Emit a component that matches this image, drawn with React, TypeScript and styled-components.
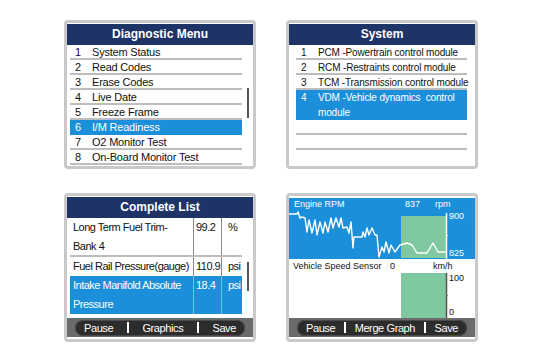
import { Fragment } from "react";
import styled, { createGlobalStyle } from "styled-components";

const GlobalStyle = createGlobalStyle`
  body {
    margin: 0;
    background: #fff;
    font-family: "Liberation Sans", Arial, sans-serif;
  }
`;

const Page = styled.div`
  width: 540px;
  height: 358px;
  box-sizing: border-box;
  padding: 20px 0 0 64px;
  display: grid;
  grid-template-columns: 192px 192px;
  grid-auto-rows: 149px;
  column-gap: 30px;
  row-gap: 24px;
`;

const Frame = styled.section`
  box-sizing: border-box;
  border: 3px solid #c9c9c9;
  border-radius: 4px;
  background: #fff;
  padding-top: 1px;
  display: flex;
  flex-direction: column;
  overflow: hidden;
`;

const Header = styled.div`
  height: 21px;
  background: #1e3466;
  color: #fff;
  font-weight: bold;
  font-size: 12px;
  line-height: 21px;
  text-align: center;
`;

const Body = styled.div<{ $left: number; $right: number }>`
  display: flex;
  margin: 0 ${(p) => p.$right}px 0 ${(p) => p.$left}px;
`;

const List = styled.div`
  flex: 1;
  min-width: 0;
`;

const ScrollTrack = styled.div`
  width: 7px;
  padding-left: 5px;
  box-sizing: border-box;
`;

const Thumb = styled.div<{ $top: number; $h: number }>`
  width: 2px;
  margin-top: ${(p) => p.$top}px;
  height: ${(p) => p.$h}px;
  background: #555;
`;

const MenuRow = styled.div<{ $active?: boolean; $lines?: number; $size: number; $ls: number }>`
  display: flex;
  box-sizing: border-box;
  height: ${(p) => (p.$lines ?? 1) * 15}px;
  padding-left: 5px;
  border-bottom: 2px solid ${(p) => (p.$active ? "transparent" : "#bdbdbd")};
  background: ${(p) => (p.$active ? "#1b8fd9" : "transparent")};
  color: ${(p) => (p.$active ? "#fff" : "#111")};
  font-size: ${(p) => p.$size}px;
  letter-spacing: ${(p) => p.$ls}px;
  line-height: 15px;
  white-space: nowrap;
`;

const Num = styled.span`
  width: 17px;
  flex: none;
`;

const DataRow = styled.div<{ $active?: boolean; $lines: number; $line?: boolean }>`
  display: grid;
  grid-template-columns: 123px 28px 1fr;
  box-sizing: border-box;
  height: ${(p) => p.$lines * 19 + (p.$line ? 1 : 0)}px;
  border-bottom: ${(p) => (p.$line ? "2px solid #bdbdbd" : "none")};
  background: ${(p) => (p.$active ? "#1b8fd9" : "transparent")};
  color: ${(p) => (p.$active ? "#fff" : "#111")};
  font-size: 11px;
  letter-spacing: -0.5px;
  line-height: 19px;
  white-space: nowrap;
`;

const Cell = styled.div<{ $pad: number; $divider?: string }>`
  padding-left: ${(p) => p.$pad}px;
  border-left: ${(p) => (p.$divider ? `1px solid ${p.$divider}` : "none")};
  overflow: hidden;
`;

const Toolbar = styled.div`
  margin: auto 0 2px;
  height: 19px;
  background: #6b6b6b;
  display: flex;
  align-items: center;
  padding: 0 8px;
`;

const Pill = styled.div`
  flex: 1;
  height: 16px;
  border-radius: 8px;
  background: #2c2c2c;
  box-shadow: inset 0 0 0 1px #4a4a4a;
  display: flex;
  align-items: center;
  justify-content: space-between;
  padding: 0 9px;
  color: #fff;
  font-size: 11px;
  letter-spacing: -0.4px;
`;

const Sep = styled.span`
  width: 2px;
  height: 11px;
  background: #fff;
`;

const Pane = styled.div<{ $blue?: boolean; $h: number }>`
  height: ${(p) => p.$h}px;
  margin-top: ${(p) => (p.$blue ? 1 : 0)}px;
  background: ${(p) => (p.$blue ? "#1b8fd9" : "#fff")};
  color: ${(p) => (p.$blue ? "#fff" : "#111")};
  display: flex;
  flex-direction: column;
  font-size: 9px;
`;

const PaneTitle = styled.div<{ $pad: number; $cols: string; $h: number }>`
  display: grid;
  grid-template-columns: ${(p) => p.$cols};
  padding-left: ${(p) => p.$pad}px;
  height: ${(p) => p.$h}px;
  line-height: 11px;
  padding-top: ${(p) => p.$h - 12}px;
  box-sizing: border-box;
  white-space: nowrap;
`;

const ChartRow = styled.div`
  flex: 1;
  display: flex;
`;

const Axis = styled.div`
  display: flex;
  flex-direction: column;
  justify-content: space-between;
  line-height: 10px;
  padding-bottom: 1px;
  padding-left: 1px;
`;

const menuItems = [
  "System Status",
  "Read Codes",
  "Erase Codes",
  "Live Date",
  "Freeze Frame",
  "I/M Readiness",
  "O2 Monitor Test",
  "On-Board Monitor Test",
];

const systemItems = [
  { n: "1", lines: ["PCM -Powertrain control module"] },
  { n: "2", lines: ["RCM -Restraints control module"] },
  { n: "3", lines: ["TCM -Transmission control module"] },
  { n: "4", lines: ["VDM -Vehicle dynamics\u00a0 control", "module"], active: true },
  { n: "", lines: [""] },
  { n: "", lines: [""] },
];

const pids = [
  { name: ["Long Term Fuel Trim-", "Bank 4"], value: "99.2", unit: "%", line: true },
  { name: ["Fuel Rail Pressure(gauge)"], value: "110.9", unit: "psi" },
  { name: ["Intake Manifold Absolute", "Pressure"], value: "18.4", unit: "psi", active: true },
];

const rpmWave = [
  [0, 3], [8, 3], [9, 1], [11, 7], [13, 6], [16, 7], [18, 21], [20, 9], [23, 22], [26, 9],
  [28, 24], [31, 11], [34, 22], [36, 11], [39, 21], [42, 7], [44, 17], [47, 7], [50, 16],
  [52, 7], [54, 17], [58, 16], [60, 22], [62, 11], [64, 37], [65, 26], [73, 26], [74, 21],
  [76, 26], [78, 17], [80, 24], [83, 17], [86, 24], [88, 24], [90, 46], [93, 36], [95, 41],
  [97, 31], [100, 42], [102, 34], [106, 41], [111, 34], [118, 32], [123, 34], [128, 42],
  [138, 42], [144, 32], [149, 41], [157, 41],
]
  .map((p) => p.join(","))
  .join(" ");

const ButtonBar = ({ items }: { items: string[] }) => (
  <Toolbar>
    <Pill>
      {items.map((it, i) => (
        <Fragment key={it}>
          {i > 0 && <Sep />}
          <span>{it}</span>
        </Fragment>
      ))}
    </Pill>
  </Toolbar>
);

const App = () => {
  return (
    <>
      <GlobalStyle />
      <Page>
        <Frame>
          <Header>Diagnostic Menu</Header>
          <Body $left={3} $right={4}>
            <List>
              {menuItems.map((m, i) => (
                <MenuRow key={m} $active={i === 5} $size={11} $ls={-0.2}>
                  <Num>{i + 1}</Num>
                  <span>{m}</span>
                </MenuRow>
              ))}
            </List>
            <ScrollTrack>
              <Thumb $top={43} $h={30} />
            </ScrollTrack>
          </Body>
        </Frame>

        <Frame>
          <Header>System</Header>
          <Body $left={7} $right={8}>
            <List>
              {systemItems.map((s, i) => (
                <MenuRow key={i} $active={s.active} $lines={s.lines.length} $size={10} $ls={-0.15}>
                  <Num>{s.n}</Num>
                  <div>
                    {s.lines.map((l) => (
                      <div key={l}>{l}</div>
                    ))}
                  </div>
                </MenuRow>
              ))}
            </List>
          </Body>
        </Frame>

        <Frame>
          <Header>Complete List</Header>
          <Body $left={3} $right={4}>
            <List>
              {pids.map((p) => (
                <DataRow key={p.value} $active={p.active} $lines={p.name.length} $line={p.line}>
                  <Cell $pad={3}>
                    {p.name.map((l) => (
                      <div key={l}>{l}</div>
                    ))}
                  </Cell>
                  <Cell $pad={2} $divider={p.active ? "#8cb6d4" : "#8a8a8a"}>
                    {p.value}
                  </Cell>
                  <Cell $pad={6} $divider={p.active ? "#8cb6d4" : "#8a8a8a"}>
                    {p.unit}
                  </Cell>
                </DataRow>
              ))}
            </List>
            <ScrollTrack>
              <Thumb $top={44} $h={29} />
            </ScrollTrack>
          </Body>
          <ButtonBar items={["Pause", "Graphics", "Save"]} />
        </Frame>

        <Frame>
          <Pane $blue $h={61}>
            <PaneTitle $pad={5} $cols="111px 30px 1fr" $h={13}>
              <span>Engine RPM</span>
              <span>837</span>
              <span>rpm</span>
            </PaneTitle>
            <ChartRow>
              <svg width="159" height="48" viewBox="0 0 159 48">
                <rect x="112" y="5" width="45" height="42" fill="#80c8a0" />
                <line x1="157.5" y1="2" x2="157.5" y2="48" stroke="#fff" strokeWidth="1.5" />
                <line x1="157" y1="24.5" x2="159" y2="24.5" stroke="#fff" strokeWidth="1" />
                <polyline
                  points={rpmWave}
                  fill="none"
                  stroke="#fff"
                  strokeWidth="1.4"
                  strokeLinejoin="round"
                />
              </svg>
              <Axis>
                <span>900</span>
                <span>825</span>
              </Axis>
            </ChartRow>
          </Pane>
          <Pane $h={59}>
            <PaneTitle $pad={4} $cols="97px 43px 1fr" $h={14}>
              <span>Vehicle Speed Sensor</span>
              <span>0</span>
              <span>km/h</span>
            </PaneTitle>
            <ChartRow>
              <svg width="159" height="45" viewBox="0 0 159 45">
                <rect x="112" y="0" width="45" height="45" fill="#80c8a0" />
                <line x1="157.5" y1="0" x2="157.5" y2="45" stroke="#555" strokeWidth="1.5" />
                <line x1="157" y1="22.5" x2="159" y2="22.5" stroke="#777" strokeWidth="1" />
              </svg>
              <Axis>
                <span>100</span>
                <span>0</span>
              </Axis>
            </ChartRow>
          </Pane>
          <ButtonBar items={["Pause", "Merge Graph", "Save"]} />
        </Frame>
      </Page>
    </>
  );
};

export default App;
